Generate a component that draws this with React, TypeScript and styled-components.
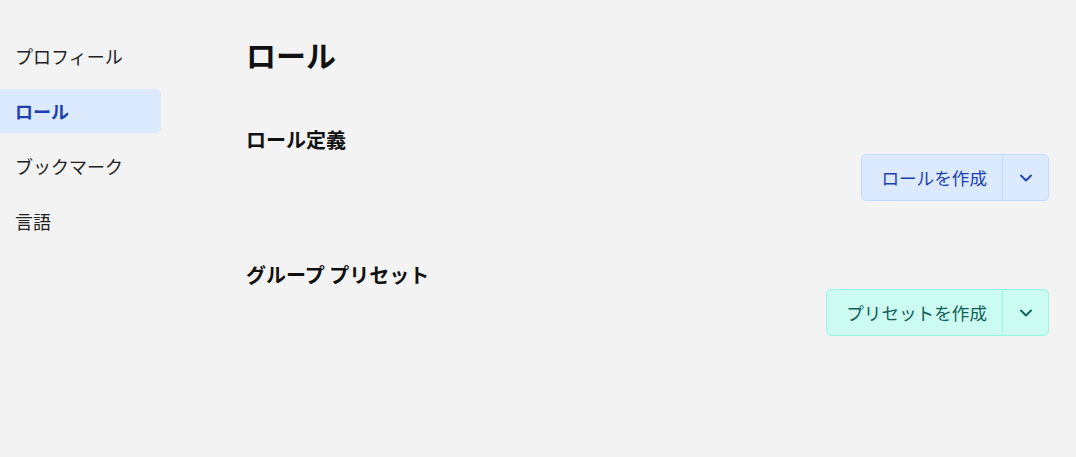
import React from "react";
import styled, { createGlobalStyle } from "styled-components";

const Global = createGlobalStyle`
  html, body { margin: 0; padding: 0; background: #f3f3f3; }
  body { font-family: "Noto Sans CJK JP", "Noto Sans", sans-serif; color: #111; }
`;

const Layout = styled.div`
  display: flex;
  min-height: 457px;
`;

const Sidebar = styled.nav`
  width: 161px;
  flex-shrink: 0;
  display: flex;
  flex-direction: column;
  gap: 11px;
  padding-top: 34px;
`;

const NavItem = styled.div<{ $active?: boolean }>`
  height: 44px;
  display: flex;
  align-items: center;
  padding-left: 15px;
  font-size: 18px;
  font-weight: ${(p) => (p.$active ? 700 : 400)};
  color: ${(p) => (p.$active ? "#1e40af" : "#222")};
  background: ${(p) => (p.$active ? "#dbeafe" : "transparent")};
  border-radius: 0 5px 5px 0;
`;

const Main = styled.main`
  flex: 1;
  padding: 30px 27px 0 85px;
`;

const Title = styled.h1`
  margin: 0 0 50px;
  font-size: 30px;
  font-weight: 700;
  line-height: 48px;
`;

const Section = styled.section`
  margin-bottom: 62px;
`;

const SectionTitle = styled.h2`
  margin: 0;
  font-size: 20px;
  font-weight: 700;
  line-height: 24px;
`;

const Actions = styled.div`
  display: flex;
  justify-content: flex-end;
  margin-top: 2px;
`;

const SplitButton = styled.div<{ $tone: "blue" | "teal" }>`
  display: flex;
  height: 47px;
  box-sizing: border-box;
  border: 1px solid ${(p) => (p.$tone === "blue" ? "#bfdbfe" : "#99f6e4")};
  background: ${(p) => (p.$tone === "blue" ? "#dbeafe" : "#ccfbf1")};
  color: ${(p) => (p.$tone === "blue" ? "#1e40af" : "#115e59")};
  border-radius: 5px;
  overflow: hidden;
`;

const MainPart = styled.button`
  all: unset;
  display: flex;
  align-items: center;
  padding: 0 15px 0 19px;
  font-family: "Noto Sans CJK JP", "Noto Sans", sans-serif;
  font-size: 17.6px;
  cursor: pointer;
`;

const ChevronPart = styled.button<{ $tone: "blue" | "teal" }>`
  all: unset;
  width: 45px;
  display: flex;
  align-items: center;
  justify-content: center;
  border-left: 1px solid ${(p) => (p.$tone === "blue" ? "#bfdbfe" : "#99f6e4")};
  cursor: pointer;
`;

const Chevron = () => (
  <svg width="14" height="14" viewBox="0 0 14 14" fill="none" stroke="currentColor" strokeWidth="1.8" strokeLinecap="round" strokeLinejoin="round">
    <path d="M2 4.5l5 5 5-5" />
  </svg>
);

export default function App() {
  return (
    <>
      <Global />
      <Layout>
        <Sidebar>
          <NavItem>プロフィール</NavItem>
          <NavItem $active>ロール</NavItem>
          <NavItem>ブックマーク</NavItem>
          <NavItem>言語</NavItem>
        </Sidebar>
        <Main>
          <Title>ロール</Title>
          <Section>
            <SectionTitle>ロール定義</SectionTitle>
            <Actions>
              <SplitButton $tone="blue">
                <MainPart>ロールを作成</MainPart>
                <ChevronPart $tone="blue"><Chevron /></ChevronPart>
              </SplitButton>
            </Actions>
          </Section>
          <Section>
            <SectionTitle>グループ プリセット</SectionTitle>
            <Actions>
              <SplitButton $tone="teal">
                <MainPart>プリセットを作成</MainPart>
                <ChevronPart $tone="teal"><Chevron /></ChevronPart>
              </SplitButton>
            </Actions>
          </Section>
        </Main>
      </Layout>
    </>
  );
}
